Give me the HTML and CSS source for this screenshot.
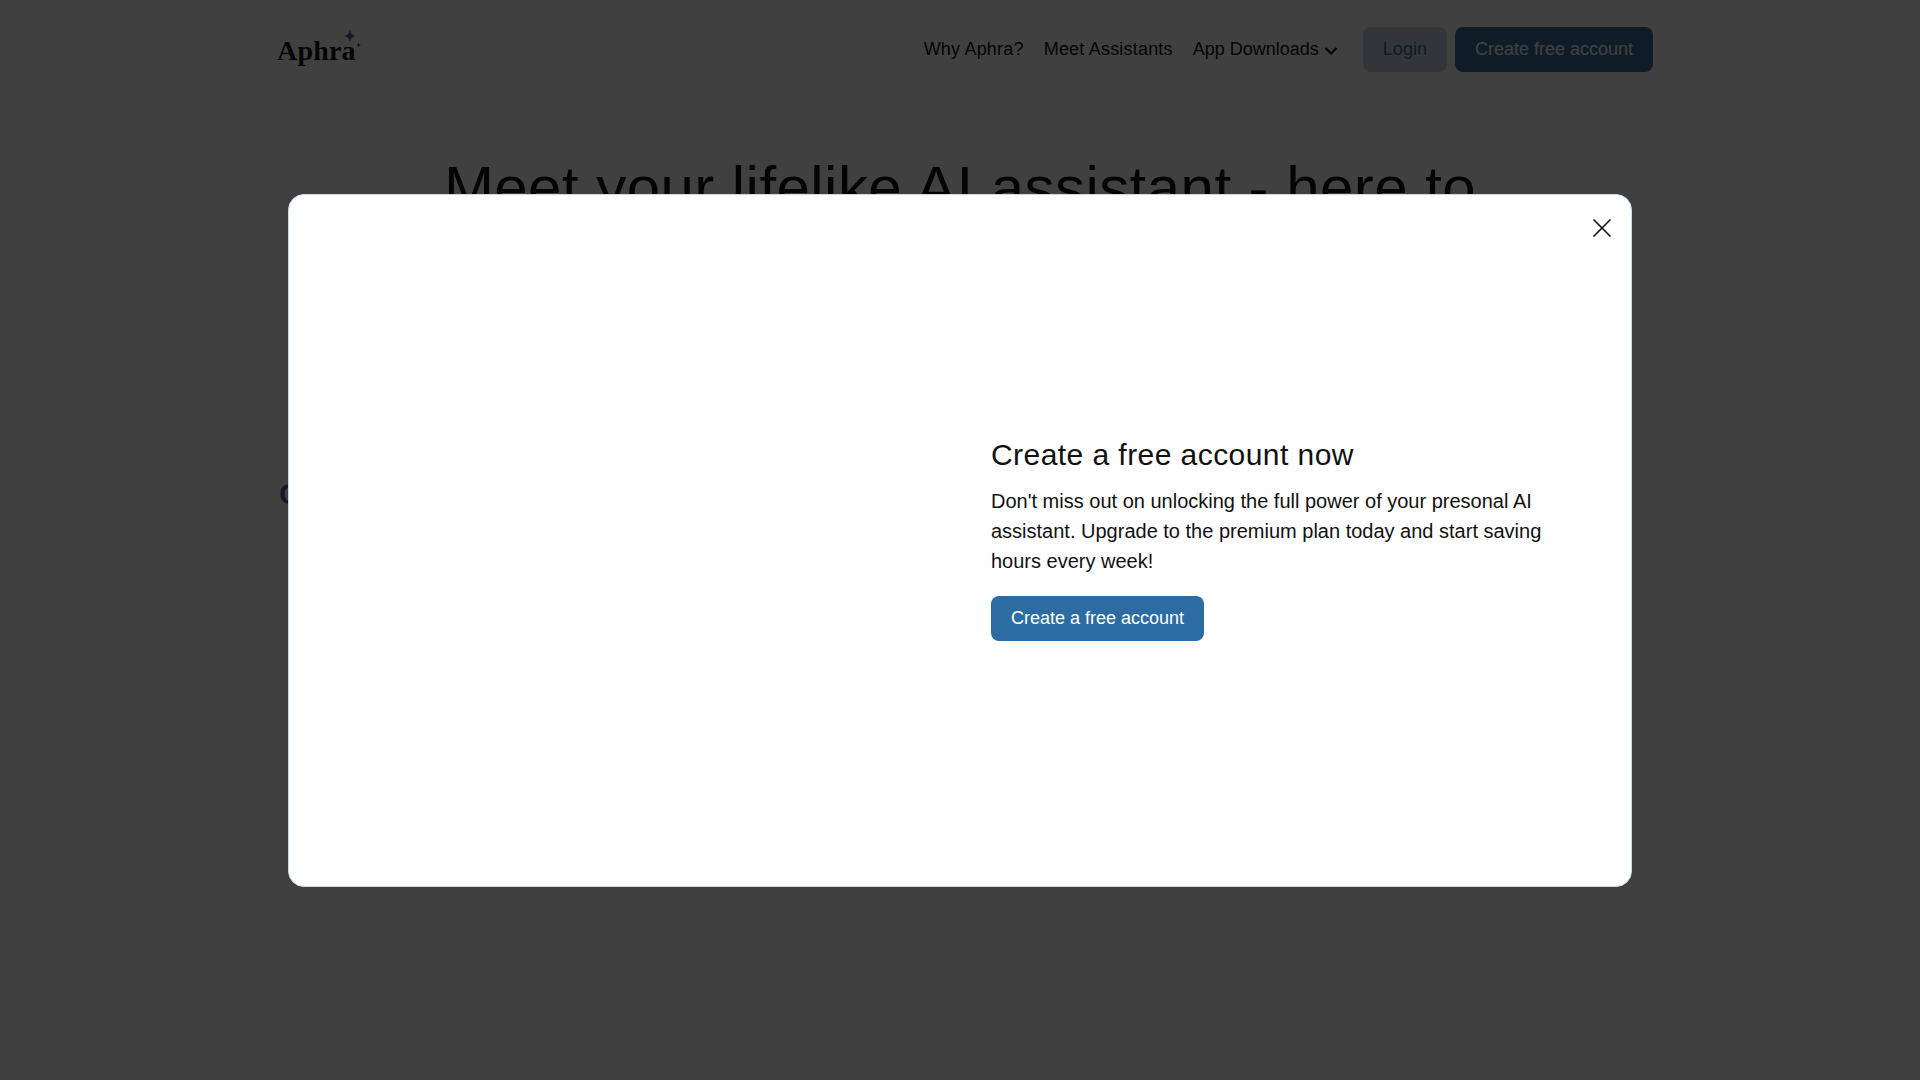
FILE: index.html
```html
<!DOCTYPE html>
<html lang="en">
<head>
<meta charset="utf-8">
<title>Aphra</title>
<link rel="stylesheet" href="styles.css">
</head>
<body>
<div class="page">
  <header class="header">
    <a class="logo">Aphra
      <svg class="logo-stars" width="26" height="26" viewBox="0 0 26 26"><path d="M11 0.500 C11.800 4.800 13.200 6.200 17.500 7 C13.200 7.800 11.800 9.200 11 13.500 C10.200 9.200 8.800 7.800 4.500 7 C8.800 6.200 10.200 4.800 11 0.500 Z"/><path d="M19.700 13.200 C20.100 15 20.700 15.600 22.500 16 C20.700 16.400 20.100 17 19.700 18.800 C19.300 17 18.700 16.400 16.900 16 C18.700 15.600 19.300 15 19.700 13.200 Z"/></svg>
    </a>
    <nav class="nav">
      <a class="nav-link">Why Aphra?</a>
      <a class="nav-link">Meet Assistants</a>
      <a class="nav-link nav-drop">App Downloads
        <svg width="14" height="10" viewBox="0 0 14 10"><path d="M1.500 2 L7 7.500 L12.500 2" fill="none" stroke="currentColor" stroke-width="2.200"/></svg>
      </a>
      <div class="nav-actions">
        <a class="btn btn-login">Login</a>
        <a class="btn btn-create">Create free account</a>
      </div>
    </nav>
  </header>
  <main class="hero">
    <h1 class="hero-title">Meet your lifelike AI assistant - here to</h1>
    <span class="hero-mark">C</span>
  </main>
</div>
<div class="overlay">
  <section class="modal">
    <button class="modal-close" aria-label="Close">
      <svg width="20" height="20" viewBox="0 0 20 20"><path d="M1.500 1.500 L18.500 18.500 M18.500 1.500 L1.500 18.500" fill="none" stroke="currentColor" stroke-width="1.600"/></svg>
    </button>
    <div class="modal-media"></div>
    <div class="modal-body">
      <h2 class="modal-title">Create a free account now</h2>
      <p class="modal-text">Don't miss out on unlocking the full power of your presonal AI assistant. Upgrade to the premium plan today and start saving hours every week!</p>
      <a class="modal-cta">Create a free account</a>
    </div>
  </section>
</div>
</body>
</html>
```

FILE: styles.css
```css
* { box-sizing: border-box; }
html, body { margin: 0; height: 100%; }
body {
  background: #fff;
  font-family: "Liberation Sans", Arial, sans-serif;
  color: #111;
  overflow: hidden;
}
.page { height: 1080px; }
.header {
  display: flex;
  justify-content: space-between;
  align-items: center;
  padding: 27px 267px 0 277px;
}
.logo {
  position: relative;
  height: 45px;
  font-family: "Liberation Serif", serif;
  font-weight: 700;
  font-size: 28px;
  line-height: 48px;
  letter-spacing: 0.2px;
  color: #111;
}
.logo-stars {
  position: absolute;
  left: 62px;
  top: 2px;
  fill: #3f6f9f;
}
.nav { display: flex; align-items: center; gap: 20px; }
.nav-link { font-size: 18px; line-height: 45px; color: #111; letter-spacing: 0.2px; }
.nav-drop { display: flex; align-items: center; gap: 5px; letter-spacing: 0; }
.nav-drop svg { margin-top: 3px; }
.nav-actions { display: flex; gap: 8px; margin-left: 5px; }
.btn {
  display: block;
  height: 45px;
  line-height: 45px;
  font-size: 18px;
  padding: 0 20px;
  border-radius: 8px;
}
.btn-login { background: #c8d8e6; color: #3f6f9f; }
.btn-create { background: #3f6f9f; color: #fff; }
.hero { padding-top: 80px; position: relative; }
.hero-title {
  margin: 0;
  text-align: center;
  font-weight: 400;
  font-size: 60px;
  line-height: 72px;
  letter-spacing: 0.45px;
  color: #111;
}
.hero-mark {
  position: absolute;
  left: 279px;
  top: 404px;
  font-size: 30px;
  line-height: 36px;
  font-weight: 700;
  color: #3f6f9f;
}
.overlay {
  position: fixed;
  inset: 0;
  display: flex;
  align-items: center;
  justify-content: center;
  background: rgba(0, 0, 0, 0.75);
}
.modal {
  position: relative;
  display: grid;
  grid-template-columns: 1fr 1fr;
  width: 1344px;
  height: 693px;
  background: #fff;
  border: 1px solid #c7dcec;
  border-radius: 16px;
}
.modal-close {
  position: absolute;
  top: 23px;
  right: 19px;
  display: flex;
  padding: 0;
  background: none;
  border: 0;
  color: #111;
}
.modal-body {
  display: flex;
  flex-direction: column;
  align-items: flex-start;
  justify-content: center;
  padding: 0 64px 3px 31px;
}
.modal-title {
  margin: 0 0 13px;
  font-weight: 400;
  font-size: 30px;
  line-height: 36px;
  letter-spacing: 0.44px;
  color: #111;
}
.modal-text {
  margin: 0 0 20px;
  font-size: 20px;
  line-height: 30px;
  color: #111;
}
.modal-cta {
  display: block;
  height: 45px;
  line-height: 45px;
  padding: 0 20px;
  font-size: 18px;
  color: #fff;
  background: #2d6ca2;
  border-radius: 8px;
}
```
